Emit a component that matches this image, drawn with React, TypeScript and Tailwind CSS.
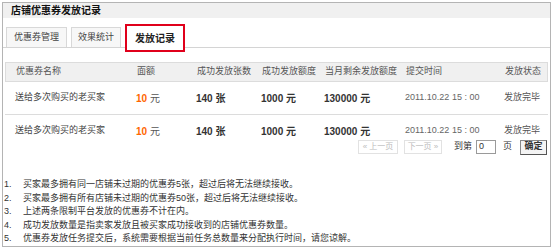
const rows = [
  { name: '送给多次购买的老买家', amount: '10', count: '140 张', quota: '1000 元', left: '130000 元', time: '2011.10.22 15 : 00', status: '发放完毕' },
  { name: '送给多次购买的老买家', amount: '10', count: '140 张', quota: '1000 元', left: '130000 元', time: '2011.10.22 15 : 00', status: '发放完毕' },
];

const notes = [
  '买家最多拥有同一店铺未过期的优惠券5张，超过后将无法继续接收。',
  '买家最多拥有所有店铺未过期的优惠券50张，超过后将无法继续接收。',
  '上述两条限制平台发放的优惠券不计在内。',
  '成功发放数量是指卖家发放且被买家成功接收到的店铺优惠券数量。',
  '优惠券发放任务提交后，系统需要根据当前任务总数量来分配执行时间，请您谅解。',
];

const font = { fontFamily: '"Liberation Sans", "Noto Sans CJK SC", sans-serif' };

export default function App() {
  return (
    <div className="h-[249px] w-[555px] whitespace-nowrap bg-white p-[2px] pr-[4px] pb-[2px]" style={font}>
      <div className="flex h-full flex-col border border-[#b4b4b4] text-[9px] text-[#333]">
        <div className="flex h-[15px] items-center bg-[#f0f0f0] pl-[8px] text-[10px] font-bold text-[#111]">
          店铺优惠券发放记录
        </div>

        <div className="mt-[6px] flex h-[24px] items-end gap-[4px] border-b border-[#d4d4d4] pl-[3px]">
          <div className="flex h-[20px] w-[61px] items-center justify-center border border-b-0 border-[#d8d8d8] bg-[#f7f7f7] text-[9px] text-[#444]">
            优惠券管理
          </div>
          <div className="flex h-[20px] w-[50px] items-center justify-center border border-b-0 border-[#d8d8d8] bg-[#f7f7f7] text-[9px] text-[#444]">
            效果统计
          </div>
          <div className="relative -mb-[5px] flex h-[28px] w-[60px] items-center justify-center border-2 border-[#e0001b] bg-white text-[10px] font-bold text-[#222]">
            发放记录
          </div>
        </div>

        <div className="mx-[2px] mt-[14px]">
          <div className="flex h-[20px] items-center border border-[#dcdcdc] bg-[#f0f0f0] text-[9px] text-[#555]">
            <div className="w-[121px] pl-[10px]">优惠券名称</div>
            <div className="w-[60px] pl-[10px]">面额</div>
            <div className="w-[72px] pl-[10px]">成功发放张数</div>
            <div className="w-[63px] pl-[3px]">成功发放额度</div>
            <div className="w-[82px] pl-[3px]">当月剩余发放额度</div>
            <div className="w-[101px] pl-[2px]">提交时间</div>
            <div className="flex-1">发放状态</div>
          </div>
          {rows.map((r, i) => (
            <div
              key={i}
              className={`flex items-center text-[9px] ${i === 0 ? 'h-[33px] border-b border-[#dcdcdc]' : 'h-[32px]'}`}
            >
              <div className="w-[121px] pl-[10px] text-[#444]">{r.name}</div>
              <div className="w-[60px] pl-[10px] text-[10px]">
                <span className="font-bold text-[#ff6600]">{r.amount}</span> <span className="text-[#555]">元</span>
              </div>
              <div className="w-[72px] pl-[10px] text-[10px] font-bold text-[#333]">{r.count}</div>
              <div className="w-[63px] pl-[3px] text-[10px] font-bold text-[#333]">{r.quota}</div>
              <div className="w-[82px] pl-[3px] text-[10px] font-bold text-[#333]">{r.left}</div>
              <div className="w-[101px] pl-[2px] text-[#666]">{r.time}</div>
              <div className="flex-1 text-[#555]">{r.status}</div>
            </div>
          ))}
          <div className="-mt-[7px] flex h-[14px] items-center justify-end pr-[1px] text-[9px]">
            <div className="flex h-[14px] w-[40px] items-center justify-center border border-[#e2e2e2] text-[8px] text-[#bbb]">« 上一页</div>
            <div className="ml-[6px] flex h-[14px] w-[38px] items-center justify-center border border-[#e2e2e2] text-[8px] text-[#bbb]">下一页 »</div>
            <span className="ml-[12px] text-[#333]">到第</span>
            <div className="ml-[4px] flex h-[14px] w-[20px] items-center border border-[#9a9a9a] pl-[2px] text-[9px]">0</div>
            <span className="ml-[7px] text-[#333]">页</span>
            <div className="ml-[8px] flex h-[15px] w-[27px] items-center justify-center border border-[#888] border-b-[#555] border-r-[#555] bg-[#f4f4f4] text-[9px] font-bold">确定</div>
          </div>
        </div>

        <ol className="mt-[24px] pl-[1px] text-[9px] leading-[13.5px] text-[#333]">
          {notes.map((n, i) => (
            <li key={i} className="flex">
              <span className="w-[19px]">{i + 1}.</span>
              <span>{n}</span>
            </li>
          ))}
        </ol>
      </div>
    </div>
  );
}
